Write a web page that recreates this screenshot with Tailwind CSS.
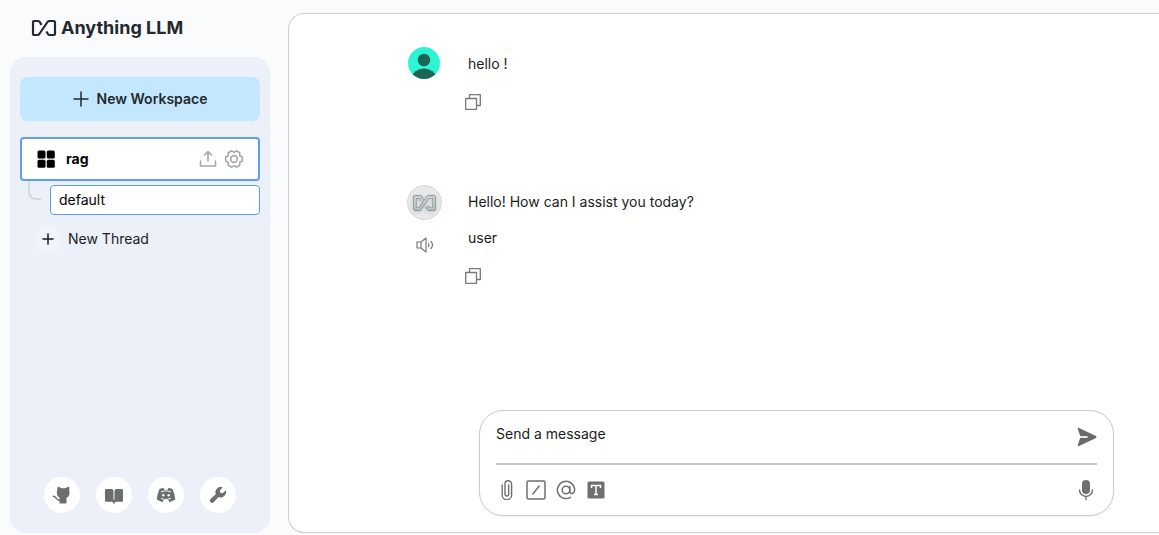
<!DOCTYPE html>
<html lang="en">
<head>
<meta charset="utf-8">
<meta name="viewport" content="width=device-width, initial-scale=1">
<title>Anything LLM</title>
<script src="https://cdn.jsdelivr.net/npm/@tailwindcss/browser@4"></script>
</head>
<body class="flex h-screen overflow-hidden bg-[#f9fbfd] font-['Inter','Liberation_Sans',sans-serif] text-sm text-[#1a1d20]">
<svg class="hidden" aria-hidden="true">
  <symbol id="mark" viewBox="0 0 26 18"><path d="M10.500 6 8.800 3Q8.300 2 7.300 2H3Q2 2 2 3V14.500Q2 16 3.500 16H6.500Q7.500 16 8.300 15L16.500 3Q17.200 2 18.500 2H22.500Q24 2 24 3.500V15Q24 16 23 16H18.500Q17.500 16 16.900 15L15.500 12.500" fill="none" stroke="currentColor" stroke-width="2.200" stroke-linecap="butt" stroke-linejoin="round"/></symbol>
  <symbol id="copy" viewBox="0 0 16 16"><path d="M4.500 4.500V.7H15.300V11.500H11.500M.7 4.500H11.500V15.300H.7Z" fill="none" stroke="currentColor" stroke-width="1.300" stroke-linejoin="round"/></symbol>
</svg>

<aside class="mb-0.5 ml-2.5 flex w-[260px] shrink-0 flex-col">
  <a href="#" class="flex h-[57px] items-center gap-1 pb-0.5 pl-[21px] text-lg font-bold text-[#25292c]">
    <svg class="h-[18px] w-[26px]"><use href="#mark"/></svg>
    <span>Anything LLM</span>
  </a>
  <div class="flex min-h-0 flex-1 flex-col rounded-2xl bg-[#ecf0f9] px-2.5 pt-5 pb-5">
    <button class="flex h-11 shrink-0 items-center justify-center gap-2 rounded-lg bg-[#c2e7fe] font-semibold text-[#25292c]">
      <svg class="size-4" viewBox="0 0 16 16" fill="none" stroke="currentColor" stroke-width="1.500" stroke-linecap="round"><path d="M8 1V15M1 8H15"/></svg>
      New Workspace
    </button>
    <div class="mt-4 flex h-11 shrink-0 items-center rounded-sm border-2 border-[#5f9df0] bg-white px-3.5 text-black">
      <a href="#" class="flex flex-1 items-center gap-2.5 font-bold">
        <svg class="size-5" viewBox="0 0 20 20" fill="currentColor"><rect x="1.500" y="1.500" width="8" height="8" rx="1.500"/><rect x="10.800" y="1.500" width="8" height="8" rx="1.500"/><rect x="1.500" y="10.800" width="8" height="8" rx="1.500"/><rect x="10.800" y="10.800" width="8" height="8" rx="1.500"/></svg>
        rag
      </a>
      <button aria-label="Upload" class="mr-[7px] text-[#a7aaaa]">
        <svg class="size-[18px]" viewBox="0 0 18 18" fill="none" stroke="currentColor" stroke-width="1.600" stroke-linecap="round" stroke-linejoin="round"><path d="M9 11V1.500M5.500 5 9 1.500 12.500 5M1.500 11V16H16.500V11"/></svg>
      </button>
      <button aria-label="Workspace settings" class="text-[#a7aaaa]">
        <svg class="size-5" viewBox="0 0 24 24" fill="none" stroke="currentColor" stroke-width="2" stroke-linejoin="round"><path d="M22 14.300 18.900 16 18.800 19.500 14.700 21.800 12 20 9.300 21.800 5.200 19.500 5.100 16 2 14.300V9.700L5.100 8 5.200 4.500 9.300 2.200 12 4 14.700 2.200 18.800 4.500 18.900 8 22 9.700Z"/><circle cx="12" cy="12" r="4"/></svg>
      </button>
    </div>
    <div class="flex pl-2">
      <div class="mr-[9px] h-[19px] w-[13px] rounded-bl-lg border-b-2 border-l-2 border-[#d5d8dc]"></div>
      <a href="#" class="mt-1 flex h-[30px] flex-1 items-center rounded-sm border border-[#5f9df0] bg-white px-2 text-black">default</a>
    </div>
    <button class="mt-3 ml-4 flex h-6 items-center gap-2 text-left">
      <span class="flex size-6 items-center justify-center rounded-lg bg-[#f0f4fb]">
        <svg class="size-3" viewBox="0 0 12 12" fill="none" stroke="currentColor" stroke-width="1.500" stroke-linecap="round"><path d="M6 1V11M1 6H11"/></svg>
      </span>
      New Thread
    </button>
    <nav class="mt-auto flex justify-center gap-4 text-[#6a6e6e]">
      <a href="#" aria-label="GitHub" class="flex size-9 items-center justify-center rounded-full bg-white">
        <svg class="size-5" viewBox="0 0 20 20"><path d="M5.800 1.800Q8 1.800 9.500 3.300H13.200Q14.800 1.800 17 1.800Q17.700 3.800 17.200 5.500 17.700 6.600 17.500 8.500 17.200 12 14.500 12.800V18.500H7.500V12.800Q5.200 12 4.900 8.500 4.800 6.600 5.300 5.500 4.900 3.800 5.800 1.800Z" fill="currentColor"/><path d="M1.300 11.300C4.800 11.300 3.500 15.700 8.500 15.500" fill="none" stroke="currentColor" stroke-width="1.400" stroke-linecap="round"/></svg>
      </a>
      <a href="#" aria-label="Documentation" class="flex size-9 items-center justify-center rounded-full bg-white">
        <svg class="size-5" viewBox="0 0 20 20" fill="currentColor"><path d="M1.800 4H7.500Q9.500 4 9.500 6V14.500H10.500V6Q10.500 4 12.500 4H18.200Q19 4 19 4.800V16Q19 16.800 18.200 16.800H12Q10.800 16.800 10.700 18.500H9.300Q9.200 16.800 8 16.800H1.800Q1 16.800 1 16V4.800Q1 4 1.800 4Z"/></svg>
      </a>
      <a href="#" aria-label="Discord" class="flex size-9 items-center justify-center rounded-full bg-white">
        <svg class="size-5" viewBox="0 0 20 20"><path d="M3.500 4 7.500 2.800 8.200 4.800H11.800L12.500 2.800 16.500 4Q18.500 8 19.300 14.500L13.500 17.300 12.400 14.700H7.600L6.500 17.300.7 14.500Q1.500 8 3.500 4Z" fill="currentColor"/><path d="M5.300 6.700Q10 4.600 14.700 6.700M5.300 13.600Q10 15.700 14.700 13.600" fill="none" stroke="white" stroke-width=".9" stroke-linecap="round"/><circle cx="7.300" cy="10.300" r="1.200" fill="white"/><circle cx="12.700" cy="10.300" r="1.200" fill="white"/></svg>
      </a>
      <a href="#" aria-label="Settings" class="flex size-9 items-center justify-center rounded-full bg-white">
        <svg class="size-5" viewBox="0 0 20 20" fill="currentColor"><path d="M17.800 5.300A5.500 5.500 0 0 1 10.500 12L5.700 17.200A2.200 2.200 0 0 1 2.500 14L7.800 9.300A5.500 5.500 0 0 1 14.700 2.200L11.800 5.400 12.200 7.800 14.600 8.200Z"/></svg>
      </a>
    </nav>
  </div>
</aside>

<main class="mt-[13px] mb-0.5 ml-[18px] flex min-w-0 flex-1 flex-col rounded-l-2xl border border-r-0 border-[#cccfcf] bg-white pt-[33px] pb-4">
  <section class="flex gap-7 pl-[119px]">
    <div class="flex w-8 shrink-0 flex-col items-center">
      <svg class="size-8" viewBox="0 0 32 32"><defs><clipPath id="round"><circle cx="16" cy="16" r="16"/></clipPath></defs><g clip-path="url(#round)"><path d="M0 0H32V32H0Z" fill="#2cf5d3"/><circle cx="16" cy="13" r="6.200" fill="#1b6555"/><ellipse cx="16" cy="31" rx="12" ry="9.500" fill="#1b6555"/></g></svg>
    </div>
    <div class="pt-[7px]">
      <p class="leading-5">hello !</p>
      <button aria-label="Copy" class="mt-5 -ml-[3px] block text-[#75797a]"><svg class="size-4"><use href="#copy"/></svg></button>
    </div>
  </section>

  <section class="mt-[75px] flex gap-[26px] pl-[118px]">
    <div class="flex w-[35px] shrink-0 flex-col items-center">
      <span class="flex size-[35px] shrink-0 items-center justify-center rounded-full border border-[#d8d8d8] bg-[#e9e9e9]">
        <svg class="h-4 w-[23px] drop-shadow-sm" viewBox="0 0 26 18" fill="none"><defs><linearGradient id="metal" gradientUnits="userSpaceOnUse" x1="0" y1="0" x2="0" y2="18"><stop stop-color="#d0d4d5"/><stop offset="1" stop-color="#aebfc8"/></linearGradient></defs><path d="M10.500 6 8.800 3Q8.300 2 7.300 2H3Q2 2 2 3V14.500Q2 16 3.500 16H6.500Q7.500 16 8.300 15L16.500 3Q17.200 2 18.500 2H22.500Q24 2 24 3.500V15Q24 16 23 16H18.500Q17.500 16 16.900 15L15.500 12.500" stroke="#7c8589" stroke-width="4"/><path d="M10.500 6 8.800 3Q8.300 2 7.300 2H3Q2 2 2 3V14.500Q2 16 3.500 16H6.500Q7.500 16 8.300 15L16.500 3Q17.200 2 18.500 2H22.500Q24 2 24 3.500V15Q24 16 23 16H18.500Q17.500 16 16.900 15L15.500 12.500" stroke="url(#metal)" stroke-width="2.600"/></svg>
      </span>
      <button aria-label="Speak message" class="mt-4 text-[#75797a]"><svg class="size-[18px]" viewBox="0 0 18 18" fill="none" stroke="currentColor" stroke-width="1.200" stroke-linejoin="round" stroke-linecap="round"><path d="M1 6H5L10 2V16L5 12H1ZM5 6V12M12.500 7.500Q13.300 9 12.500 10.500M15 5.500Q18 9 15 12.500"/></svg></button>
    </div>
    <div class="pt-[7px]">
      <p class="leading-5">Hello! How can I assist you today?</p>
      <p class="mt-4 leading-5">user</p>
      <button aria-label="Copy" class="mt-5 -ml-[3px] block text-[#75797a]"><svg class="size-4"><use href="#copy"/></svg></button>
    </div>
  </section>

  <form class="mt-auto mr-[45px] ml-[190px] rounded-3xl border border-[#c8cbcb] bg-white px-4 shadow-xs">
    <div class="flex h-[54px] items-start justify-between border-b-2 border-[#c8c8c8]">
      <textarea rows="1" aria-label="Send a message" placeholder="Send a message" class="mt-[13px] h-5 flex-1 resize-none leading-5 outline-none placeholder:text-[#1a1d20]"></textarea>
      <button aria-label="Send" class="mt-4 text-[#686b6b]"><svg class="size-5" viewBox="0 0 20 20"><path d="M1.500.8 19 9Q20 10 19 11L1.500 19.200Q.6 19.200.8 18L3.200 11 3.200 9 .8 2Q.6.8 1.500.8Z" fill="currentColor"/><path d="M3 10H10.500" stroke="white" stroke-width="1.700"/></svg></button>
    </div>
    <div class="flex h-[50px] items-center gap-2.5 text-[#6d7070]">
      <button type="button" aria-label="Attach file"><svg class="size-5" viewBox="0 0 20 20" fill="none" stroke="currentColor" stroke-width="1.400" stroke-linecap="round"><path d="M6.200 5V15A4.700 4.700 0 0 0 15.600 15V4A3.300 3.300 0 0 0 9 4V14.500A1.900 1.900 0 0 0 12.700 14.500V5"/></svg></button>
      <button type="button" aria-label="Slash commands"><svg class="size-5" viewBox="0 0 20 20" fill="none" stroke="currentColor" stroke-width="1.500" stroke-linecap="round"><rect x="1" y="1" width="18" height="18" rx="1.500"/><path d="M13.200 6 6.800 14"/></svg></button>
      <button type="button" aria-label="Mention agent"><svg class="size-5" viewBox="0 0 20 20" fill="none" stroke="currentColor" stroke-width="1.500" stroke-linecap="round"><circle cx="10" cy="10" r="3.800"/><path d="M13.800 6.500V11.200Q14 13.500 16 13.500 18.600 13 18.600 10A8.600 8.600 0 1 0 14.500 17.300"/></svg></button>
      <button type="button" aria-label="Text size"><svg class="size-5" viewBox="0 0 20 20"><rect x="1.500" y="1.500" width="17" height="17" rx="1.500" fill="currentColor"/><path d="M5.500 8V5.500H14.500V8M10 5.500V14.500M8 14.500H12" fill="none" stroke="white" stroke-width="1.500"/></svg></button>
      <button type="button" aria-label="Voice input" class="ml-auto"><svg class="size-[22px]" viewBox="0 0 22 22"><rect x="7" y="1" width="8" height="14" rx="4" fill="currentColor"/><path d="M4.500 11A6.500 6.500 0 0 0 17.500 11M11 17.500V20.500" fill="none" stroke="currentColor" stroke-width="1.400" stroke-linecap="round"/></svg></button>
    </div>
  </form>
</main>
</body>
</html>
